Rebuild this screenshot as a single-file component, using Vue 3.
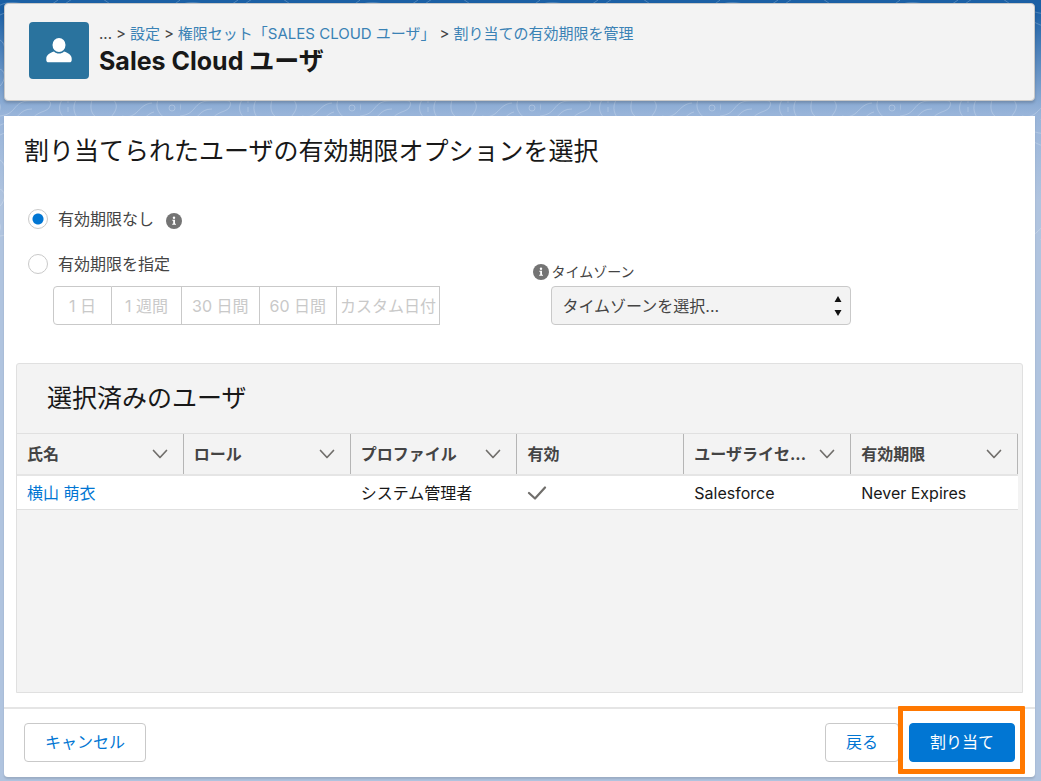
<script setup>
import { ref } from 'vue'

const expiration = ref('none')
const timezone = ref('')
const durations = ['1 日', '1 週間', '30 日間', '60 日間', 'カスタム日付']
const columns = [
  { label: '氏名', menu: true },
  { label: 'ロール', menu: true },
  { label: 'プロファイル', menu: true },
  { label: '有効', menu: false },
  { label: 'ユーザライセ...', menu: true },
  { label: '有効期限', menu: true },
]
const users = [
  { name: '横山 萌衣', role: '', profile: 'システム管理者', active: true, license: 'Salesforce', expires: 'Never Expires' },
]
</script>

<template>
  <div class="page">
    <svg class="contours" aria-hidden="true">
      <defs>
        <pattern id="topo" width="180" height="120" patternUnits="userSpaceOnUse">
          <g fill="none" stroke="#fff" stroke-opacity=".22" stroke-width="1">
            <path d="M-5 18C20 0 34 30 60 8S96 -8 120 12s38 20 65 2" />
            <path d="M-5 8C18 -8 36 18 58 0M120 4c18 14 40 14 65-8" />
            <path d="M0 116C18 114 12 101 30 101S52 99 50 106 36 110 30 122" />
            <path d="M6 122c14-2 12-13 26-13" />
            <path d="M62 100c-6 10 0 18 8 22M76 100c-4 8-2 14 4 22" />
            <path d="M-5 98c10 8 4 16-2 20M92 100c-4 14 4 18 12 22M112 98c10 10 0 16-4 24" />
            <ellipse cx="172" cy="108" rx="3" ry="3" />
            <path d="M158 100c-4 10 4 18 14 22" />
            <path d="M122 116c16 4 16-12 30-13" />
            <path d="M134 122c12-2 12-8 20-10" />
            <path d="M0 40c8 4 2 18 14 24s8 24-2 30M180 40c-8 12 6 24 0 54M-4 70c8-4 12 8 4 16" />
            <path d="M68 98v24" stroke-dasharray="5 4" />
          </g>
        </pattern>
      </defs>
      <rect width="100%" height="100%" fill="url(#topo)" />
    </svg>

    <header class="page-header">
      <span class="entity-icon">
        <svg width="26" height="25" viewBox="0 0 26 25" fill="#fff" aria-hidden="true">
          <ellipse cx="13" cy="7" rx="6.5" ry="7" />
          <path d="M8 13.4C3.6 14.8.3 17 .3 20.4v1.8c0 1.2.9 2.1 2.1 2.1h21.2c1.2 0 2.1-.9 2.1-2.1v-1.8c0-3.400-3.300-5.600-7.700-7-1.300 1.300-3 2.100-5 2.100s-3.700-.8-5-2.100z" />
        </svg>
      </span>
      <div>
        <nav class="crumbs" aria-label="パンくず">
          <span>...</span><span class="sep">&gt;</span><a href="#">設定</a><span class="sep">&gt;</span><a href="#">権限セット「SALES CLOUD ユーザ」</a><span class="sep">&gt;</span><a href="#">割り当ての有効期限を管理</a>
        </nav>
        <h1>Sales Cloud ユーザ</h1>
      </div>
    </header>

    <main class="panel">
      <section class="options">
        <h2>割り当てられたユーザの有効期限オプションを選択</h2>
        <div class="choice first">
          <input id="exp-none" v-model="expiration" type="radio" name="expiration" value="none" />
          <label for="exp-none">有効期限なし</label>
          <svg class="info" viewBox="0 0 16 16" aria-hidden="true">
            <circle cx="8" cy="8" r="8" fill="#747474" />
            <circle cx="8" cy="4.700" r="1.200" fill="#fff" />
            <path d="M6.300 6.700h2.700v4h1v1.100H6.200v-1.100h1V7.800h-.9z" fill="#fff" />
          </svg>
        </div>
        <div class="split">
          <div class="specify">
            <div class="choice">
              <input id="exp-set" v-model="expiration" type="radio" name="expiration" value="set" />
              <label for="exp-set">有効期限を指定</label>
            </div>
            <div class="durations">
              <button v-for="d in durations" :key="d" type="button" disabled>{{ d }}</button>
            </div>
          </div>
          <div class="zone">
            <div class="zone-label">
              <svg class="info" viewBox="0 0 16 16" aria-hidden="true">
                <circle cx="8" cy="8" r="8" fill="#747474" />
                <circle cx="8" cy="4.700" r="1.200" fill="#fff" />
                <path d="M6.300 6.700h2.700v4h1v1.100H6.200v-1.100h1V7.800h-.9z" fill="#fff" />
              </svg>
              <label for="tz">タイムゾーン</label>
            </div>
            <div class="select-wrap">
              <select id="tz" v-model="timezone">
                <option value="">タイムゾーンを選択...</option>
              </select>
              <svg class="updown" width="8" height="20" viewBox="0 0 8 20" aria-hidden="true">
                <path d="M4 0l3.500 6h-7zM4 20l3.500-6h-7z" fill="#111" />
              </svg>
            </div>
          </div>
        </div>
      </section>

      <section class="list">
        <h2>選択済みのユーザ</h2>
        <table>
          <thead>
            <tr>
              <th v-for="c in columns" :key="c.label" scope="col">
                <div class="th">
                  <span>{{ c.label }}</span>
                  <svg v-if="c.menu" width="16" height="10" viewBox="0 0 16 10" fill="none" stroke="#706e6b" stroke-width="1.700" stroke-linecap="round" stroke-linejoin="round" aria-hidden="true">
                    <path d="M1.500 1.500l6.500 7 6.500-7" />
                  </svg>
                </div>
              </th>
            </tr>
          </thead>
          <tbody>
            <tr v-for="u in users" :key="u.name">
              <td><a href="#">{{ u.name }}</a></td>
              <td>{{ u.role }}</td>
              <td>{{ u.profile }}</td>
              <td>
                <svg v-if="u.active" class="check" width="20" height="14" viewBox="0 0 20 14" fill="none" stroke="#706e6b" stroke-width="2.200" stroke-linecap="round" stroke-linejoin="round" role="img" aria-label="有効">
                  <path d="M2 7l6 5.500L18 1.500" />
                </svg>
              </td>
              <td>{{ u.license }}</td>
              <td>{{ u.expires }}</td>
            </tr>
          </tbody>
        </table>
      </section>

      <footer>
        <button type="button" class="btn">キャンセル</button>
        <div class="right">
          <button type="button" class="btn">戻る</button>
          <div class="primary-wrap">
            <button type="button" class="btn primary">割り当て</button>
            <span class="highlight"></span>
          </div>
        </div>
      </footer>
    </main>
  </div>
</template>

<style>
body { background: #b0c4df; }
</style>

<style scoped>
* { box-sizing: border-box; }
.page {
  position: relative;
  display: flex;
  flex-direction: column;
  gap: 15px;
  min-height: 100vh;
  padding: 3px 6px 4px 4px;
  background: linear-gradient(#1b60a5 0, #1b60a5 10px, #98b4d9 114px, #b0c4df 200px);
  color: #181818;
  font: 16px/24px Inter, "Noto Sans CJK JP", sans-serif;
}
.contours { position: absolute; top: 0; left: 0; width: 100%; height: 240px; }
.page-header, .panel { position: relative; }
a { color: #0176d3; text-decoration: none; }
h1, h2 { margin: 0; }
button, select { font: inherit; }

.page-header {
  display: flex;
  gap: 10px;
  height: 98px;
  padding: 18px 24px;
  background: #f3f3f3;
  border: 1px solid #c9c9c9;
  border-radius: 4px;
  box-shadow: 0 2px 3px rgba(0, 0, 0, .18);
}
.entity-icon {
  display: flex;
  align-items: center;
  justify-content: center;
  width: 60px;
  height: 57px;
  border-radius: 4px;
  background: #2a739e;
}
.crumbs {
  display: flex;
  height: 24px;
  font-size: 15px;
  color: #444;
  white-space: nowrap;
}
.crumbs a { color: #3a82b5; }
.sep { margin: 0 4px; }
h1 { font-size: 25px; line-height: 30px; font-weight: 700; }

.panel {
  flex: 1;
  display: flex;
  flex-direction: column;
  background: #fff;
  border-radius: 0 0 4px 4px;
  box-shadow: 0 2px 2px rgba(0, 0, 0, .12);
}
.options { padding: 17px 20px 38px; }
h2 { font-size: 25px; line-height: 36px; font-weight: 400; }
.choice { display: flex; align-items: center; height: 24px; color: #444; }
.choice.first { margin: 38px 0 21px; }
.choice input {
  appearance: none;
  width: 20px;
  height: 20px;
  margin: 0 10px 0 4px;
  border: 1px solid #c9c9c9;
  border-radius: 50%;
  background: #fff;
}
.choice input:checked { background: radial-gradient(circle, #0176d3 5px, #fff 6px); }
.info { width: 16px; height: 16px; flex: none; }
.choice .info { margin: 4px 0 0 12px; }
.split { display: flex; gap: 4px; }
.specify { width: 51%; }
.durations { display: flex; margin: 10px 0 0 29px; }
.durations button {
  height: 39px;
  padding: 0 10px;
  border: 1px solid #c9c9c9;
  border-left-width: 0;
  background: #fff;
  color: #c9c9c9;
  white-space: nowrap;
}
.durations button:first-child { padding: 0 15px; border-left-width: 1px; border-radius: 4px 0 0 4px; }
.durations button:nth-child(2) { padding: 0 13px; }
.durations button:last-child { padding: 0 3px; }
.zone { width: 318px; padding-top: 8px; }
.zone-label { display: flex; align-items: center; gap: 2px; height: 24px; font-size: 14px; color: #444; }
.select-wrap { position: relative; margin: 2px 0 0 18px; }
.select-wrap select {
  appearance: none;
  display: block;
  width: 100%;
  height: 39px;
  padding: 0 10px;
  border: 1px solid #c9c9c9;
  border-radius: 4px;
  background: #f3f3f3;
  color: #444;
}
.updown { position: absolute; right: 9px; top: 10px; pointer-events: none; }

.list {
  flex: 1;
  margin: 0 12px 14px;
  padding-right: 4px;
  border: 1px solid #e0e0e0;
  border-radius: 3px 3px 0 0;
  background: #f3f3f3;
}
.list h2 { padding: 16px 0 17px 30px; }
table { width: 100%; border-collapse: separate; border-spacing: 0; table-layout: fixed; }
th {
  height: 43px;
  padding: 0 16px 0 10px;
  border-top: 1px solid #e0e0e0;
  border-bottom: 2px solid #e5e5e5;
  text-align: left;
  color: #444;
  font-weight: 700;
  background: linear-gradient(#b5b5b5, #b5b5b5) right / 1px 100% no-repeat;
}
.th { display: flex; align-items: center; justify-content: space-between; gap: 8px; }
.th span { white-space: nowrap; }
.th svg { flex: none; }
td {
  height: 34px;
  padding: 0 10px;
  border-bottom: 1px solid #e0e0e0;
  background: #fff;
  white-space: nowrap;
}
.check { display: block; }

footer {
  display: flex;
  align-items: center;
  justify-content: space-between;
  height: 70px;
  padding: 0 20px 2px;
  border-top: 2px solid #e5e5e5;
}
.right { display: flex; gap: 10px; }
.btn {
  height: 39px;
  padding: 0 20px;
  border: 1px solid #c9c9c9;
  border-radius: 4px;
  background: #fff;
  color: #0176d3;
}
.btn.primary { border-color: #0176d3; background: #0176d3; color: #fff; }
.primary-wrap { position: relative; }
.highlight {
  position: absolute;
  inset: -17px -10px -12px -11px;
  border: 5px solid #ff7800;
  border-radius: 1px;
  pointer-events: none;
}
</style>
